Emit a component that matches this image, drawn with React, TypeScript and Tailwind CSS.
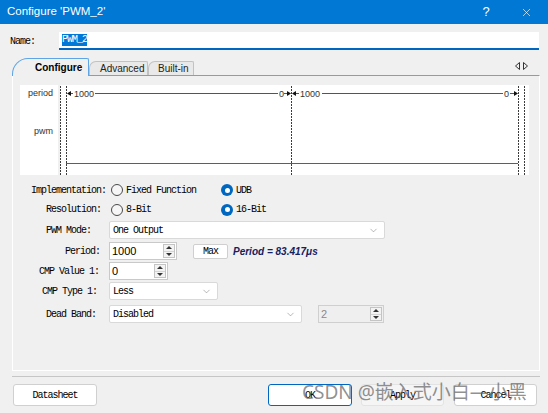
import { ChevronDown, X } from 'lucide-react';

const MONO = "font-['Liberation_Mono',monospace] text-[10px] tracking-[-1px] text-black";
const SANS = "font-['Liberation_Sans',Arial,sans-serif]";

function Radio({ checked }: { checked?: boolean }) {
  if (checked) {
    return (
      <span className="w-[12px] h-[12px] rounded-full bg-[#0067c0] flex items-center justify-center shrink-0">
        <span className="w-[5px] h-[5px] rounded-full bg-white" />
      </span>
    );
  }
  return <span className="w-[12px] h-[12px] rounded-full border border-[#4a4a4a] bg-[#f6f6f6] shrink-0" />;
}

function Select({ value, className }: { value: string; className: string }) {
  return (
    <div className={`h-[18px] bg-white border border-[#d9d9d9] rounded-[2px] flex items-center pl-[3px] pr-[5px] ${className}`}>
      <span className={`flex-1 ${MONO}`}>{value}</span>
      <ChevronDown size={11} strokeWidth={1} className="text-[#666]" />
    </div>
  );
}

function Spin({ value, className, disabled }: { value: string; className: string; disabled?: boolean }) {
  return (
    <div
      className={`h-[18px] border flex items-center pl-[2px] pr-[1px] ${
        disabled ? 'bg-[#efefef] border-[#cfcfcf] text-[#8a8a8a]' : 'bg-white border-[#c9c9c9] text-black'
      } ${className}`}
    >
      <span className={`flex-1 text-[11px] ${SANS}`}>{value}</span>
      <div className="w-[12px] h-[14px] flex flex-col border border-[#c4c4c4] bg-[#f3f3f3]">
        <div className="flex-1 flex items-center justify-center border-b border-[#d4d4d4]">
          <span className="w-0 h-0 border-l-[3px] border-r-[3px] border-b-[3px] border-l-transparent border-r-transparent border-b-[#333]" />
        </div>
        <div className="flex-1 flex items-center justify-center">
          <span className="w-0 h-0 border-l-[3px] border-r-[3px] border-t-[3px] border-l-transparent border-r-transparent border-t-[#333]" />
        </div>
      </div>
    </div>
  );
}

function Wave() {
  const dash = '2 1';
  return (
    <svg width="469" height="90" className="block bg-white">
      {[0.5, 6.5, 231.5, 458.5, 464.5].map((x) => (
        <line key={x} x1={x} y1={1} x2={x} y2={90} stroke="#3c3c3c" strokeDasharray={dash} strokeWidth={1} />
      ))}
      <g stroke="#555" strokeWidth={1}>
        <line x1={10} y1={8.5} x2={13} y2={8.5} />
        <line x1={35} y1={8.5} x2={218} y2={8.5} />
        <line x1={224} y1={8.5} x2={229} y2={8.5} />
        <line x1={236} y1={8.5} x2={239} y2={8.5} />
        <line x1={262} y1={8.5} x2={443} y2={8.5} />
        <line x1={450} y1={8.5} x2={455} y2={8.5} />
      </g>
      <g fill="#111">
        <polygon points="7,8.5 11,6 11,11" />
        <polygon points="231,8.5 227,6 227,11" />
        <polygon points="232,8.5 236,6 236,11" />
        <polygon points="458,8.5 454,6 454,11" />
      </g>
      <g fontFamily="Liberation Sans, Arial, sans-serif" fontSize="9" fill="#333">
        <text x={14} y={11.5}>1000</text>
        <text x={219} y={11.5}>0</text>
        <text x={240} y={11.5}>1000</text>
        <text x={444} y={11.5}>0</text>
      </g>
      <line x1={6} y1={78.5} x2={458} y2={78.5} stroke="#4c4cf2" strokeWidth={1} />
    </svg>
  );
}

export default function App() {
  return (
    <div className={`relative w-[548px] h-[413px] bg-[#f0f0f0] overflow-hidden flex flex-col ${SANS}`}>
      {/* title bar */}
      <div className="h-[24px] bg-[#0078d4] flex items-center text-white shrink-0">
        <span className="pl-[7px] text-[11.5px]">Configure 'PWM_2'</span>
        <span className="ml-auto w-[20px] text-center text-[13px] font-light">?</span>
        <span className="ml-[20px] mr-[12px] w-[20px] flex justify-center">
          <X size={13} strokeWidth={1.2} />
        </span>
      </div>

      {/* name row */}
      <div className="mt-[8px] h-[18px] flex items-center shrink-0">
        <span className={`pl-[10px] w-[59px] ${MONO}`}>Name:</span>
        <div className="w-[480px] h-[18px] bg-white border-b-2 border-[#0067c0] flex items-center pl-[3px]">
          <span className={`bg-[#0078d7] leading-[12px] ${MONO} text-white`}>PWM_2</span>
        </div>
      </div>

      {/* tabs */}
      <div className="mt-[6px] h-[19px] flex items-end pl-[12px] pr-[9px] shrink-0">
        <div className="relative z-10 -mb-px h-[18px] w-[77px] bg-[#f0f0f0] border border-b-0 border-[#5fa5e6] rounded-tl-[16px] rounded-tr-[2px] flex items-center pl-[22px]">
          <span className="text-[10px] font-bold text-black">Configure</span>
        </div>
        <div className="h-[14px] w-[59px] bg-[#e9e9e9] border border-b-0 border-[#c2c2c2] rounded-tl-[7px] rounded-tr-[2px] flex items-center pl-[10px]">
          <span className="text-[10px] text-[#222]">Advanced</span>
        </div>
        <div className="h-[14px] w-[46px] bg-[#e9e9e9] border border-b-0 border-[#c2c2c2] rounded-tl-[7px] rounded-tr-[2px] flex items-center pl-[9px]">
          <span className="text-[10px] text-[#222]">Built-in</span>
        </div>
        <div className="ml-auto mb-[5px] mr-[11px] flex gap-[3px]">
          <svg width="5" height="8">
            <polygon points="4.5,0.5 0.5,4 4.5,7.5" fill="none" stroke="#333" />
          </svg>
          <svg width="5" height="8">
            <polygon points="0.5,0.5 4.5,4 0.5,7.5" fill="none" stroke="#333" />
          </svg>
        </div>
      </div>

      {/* panel */}
      <div className="ml-[12px] w-[528px] h-[296px] border-t border-t-[#62a8e8] border-l border-r border-b border-l-white border-r-white border-b-white flex flex-col shrink-0">
        <div className="mt-[9px] ml-[7px] w-[509px] h-[90px] flex">
          <div className="w-[38px] bg-white flex flex-col items-end pr-[5px] text-[9px] leading-[10px] text-[#333]">
            <span className="mt-[3px]">period</span>
            <span className="mt-[28px]">pwm</span>
          </div>
          <div className="w-[2px]" />
          <Wave />
        </div>

        {/* form */}
        <div className="mt-[6px] h-[18px] flex items-center">
          <span className={`w-[96px] text-right pr-[3px] ${MONO}`}>Implementation:</span>
          <div className="w-[110px] ml-[2px] flex items-center gap-[3px]">
            <Radio />
            <span className={MONO}>Fixed Function</span>
          </div>
          <div className="flex items-center gap-[3px]">
            <Radio checked />
            <span className={MONO}>UDB</span>
          </div>
        </div>
        <div className="mt-[1px] h-[19px] flex items-center">
          <span className={`w-[96px] text-right pr-[8px] ${MONO}`}>Resolution:</span>
          <div className="w-[110px] ml-[2px] flex items-center gap-[3px]">
            <Radio />
            <span className={MONO}>8-Bit</span>
          </div>
          <div className="flex items-center gap-[3px]">
            <Radio checked />
            <span className={MONO}>16-Bit</span>
          </div>
        </div>
        <div className="mt-[2px] h-[18px] flex items-center">
          <span className={`w-[96px] text-right pr-[18px] ${MONO}`}>PWM Mode:</span>
          <Select value="One Output" className="w-[276px]" />
        </div>
        <div className="mt-[3px] h-[18px] flex items-center">
          <span className={`w-[96px] text-right pr-[9px] ${MONO}`}>Period:</span>
          <Spin value="1000" className="w-[68px]" />
          <div className="ml-[16px] w-[35px] h-[15px] bg-white border border-[#cfcfcf] rounded-[2px] flex items-center justify-center">
            <span className={MONO}>Max</span>
          </div>
          <span className="ml-[5px] text-[10px] font-bold italic text-[#16205e]">Period = 83.417μs</span>
        </div>
        <div className="mt-[2px] h-[18px] flex items-center">
          <span className={`w-[96px] text-right pr-[10px] ${MONO}`}>CMP Value 1:</span>
          <Spin value="0" className="w-[59px]" />
        </div>
        <div className="mt-[2px] h-[18px] flex items-center">
          <span className={`w-[96px] text-right pr-[12px] ${MONO}`}>CMP Type 1:</span>
          <Select value="Less" className="w-[109px]" />
        </div>
        <div className="mt-[5px] h-[18px] flex items-center">
          <span className={`w-[96px] text-right pr-[13px] ${MONO}`}>Dead Band:</span>
          <Select value="Disabled" className="w-[193px]" />
          <Spin value="2" disabled className="ml-[16px] w-[66px]" />
        </div>
      </div>

      {/* separator */}
      <div className="mt-[5px] ml-[12px] w-[528px] h-px bg-[#c6c6c6] shrink-0" />

      {/* buttons */}
      <div className="mt-[7px] h-[22px] flex pl-[13px] pr-[11px] shrink-0">
        <div className="w-[84px] bg-white border border-[#d0d0d0] rounded-[3px] flex items-center justify-center">
          <span className={MONO}>Datasheet</span>
        </div>
        <div className="ml-auto w-[84px] bg-white border border-[#0067c0] rounded-[3px] flex items-center justify-center">
          <span className={MONO}>OK</span>
        </div>
        <div className="ml-[9px] w-[83px] bg-[#f5f5f5] border border-[#e3e3e3] rounded-[3px] flex items-center justify-center">
          <span className={`${MONO} text-[#a8a8a8]`}>Apply</span>
        </div>
        <div className="ml-[10px] w-[83px] bg-white border border-[#d0d0d0] rounded-[3px] flex items-center justify-center">
          <span className={MONO}>Cancel</span>
        </div>
      </div>

      {/* watermark */}
      <div className="absolute left-[302px] top-[380px] text-[19px] leading-[24px] text-[#606060]/70 font-['Noto_Sans','Noto_Sans_CJK_SC',sans-serif] whitespace-nowrap">
        CSDN @嵌入式小白—小黑
      </div>
    </div>
  );
}
